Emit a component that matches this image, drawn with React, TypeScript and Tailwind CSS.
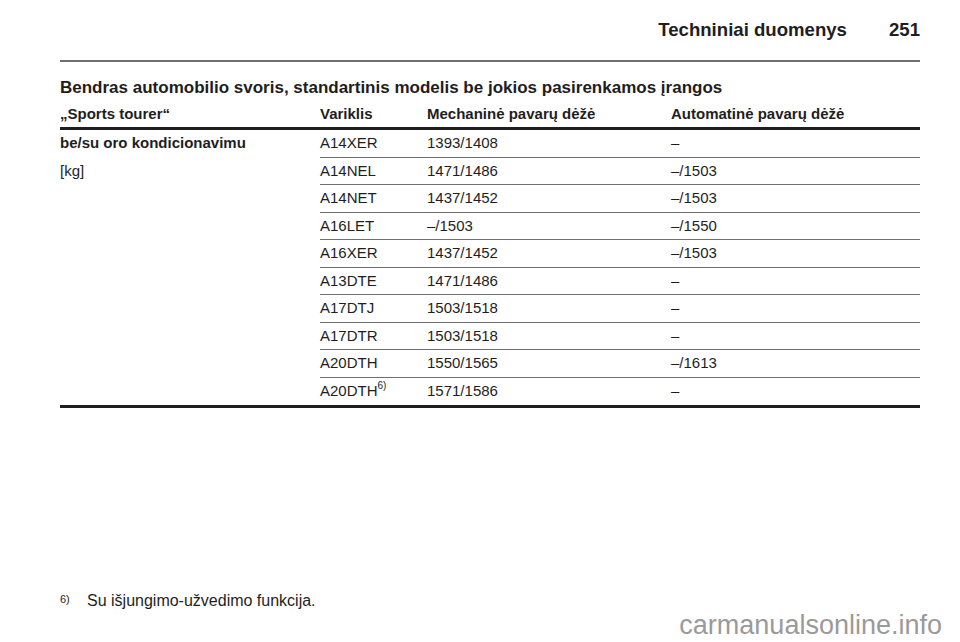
import React from "react";

const rows: [React.ReactNode, string, string][] = [
  ["A14XER", "1393/1408", "–"],
  ["A14NEL", "1471/1486", "–/1503"],
  ["A14NET", "1437/1452", "–/1503"],
  ["A16LET", "–/1503", "–/1550"],
  ["A16XER", "1437/1452", "–/1503"],
  ["A13DTE", "1471/1486", "–"],
  ["A17DTJ", "1503/1518", "–"],
  ["A17DTR", "1503/1518", "–"],
  ["A20DTH", "1550/1565", "–/1613"],
  [
    <>
      A20DTH<sup className="text-[10px] relative top-[-1px] align-super leading-none">6)</sup>
    </>,
    "1571/1586",
    "–",
  ],
];

export default function App() {
  return (
    <div
      className="relative w-[960px] h-[642px] bg-white text-[#1e1e1e] overflow-hidden"
      style={{ fontFamily: '"Liberation Sans", Arial, sans-serif' }}
    >
      <div className="pl-[60px] pr-[40px]">
        {/* page header */}
        <div className="pt-[20px] flex justify-end gap-[42px] text-[18.6px] leading-[20px] font-bold">
          <span>Techniniai duomenys</span>
          <span>251</span>
        </div>
        <div className="mt-[20px] border-t-2 border-[#6f6f6f]" />

        {/* title */}
        <div className="mt-[16px] text-[17px] leading-[20px] font-bold">
          Bendras automobilio svoris, standartinis modelis be jokios pasirenkamos įrangos
        </div>

        {/* table header */}
        <div className="mt-[7px] flex text-[15px] leading-[18px] font-bold pb-[4px]">
          <div className="w-[260px]">„Sports tourer“</div>
          <div className="w-[107px]">Variklis</div>
          <div className="w-[244px]">Mechaninė pavarų dėžė</div>
          <div className="flex-1">Automatinė pavarų dėžė</div>
        </div>
        <div className="border-t-[3px] border-[#1e1e1e]" />

        {/* table body */}
        <div className="flex text-[15px]">
          <div className="w-[260px]">
            <div className="h-[27.5px] leading-[26.5px] font-bold">be/su oro kondicionavimu</div>
            <div className="h-[27.5px] leading-[26.5px]">[kg]</div>
          </div>
          <div className="flex-1 flex flex-col">
            {rows.map((r, i) => (
              <div
                key={i}
                className={
                  "flex h-[27.5px] leading-[26.5px] " +
                  (i < rows.length - 1 ? "border-b border-[#707070]" : "")
                }
              >
                <div className="w-[107px] whitespace-nowrap">{r[0]}</div>
                <div className="w-[244px]">{r[1]}</div>
                <div className="flex-1">{r[2]}</div>
              </div>
            ))}
          </div>
        </div>
        <div className="border-t-[3px] border-[#1e1e1e]" />

        {/* footnote */}
        <div className="mt-[183px] flex items-start">
          <span className="w-[27px] text-[11px] leading-[11px] pt-[3px]">6)</span>
          <span className="text-[16px] leading-[20px]">Su išjungimo-užvedimo funkcija.</span>
        </div>
      </div>

      {/* watermark */}
      <div className="absolute right-[18px] top-[612px] text-[27px] leading-none text-[#9a9a9a]">
        carmanualsonline.info
      </div>
    </div>
  );
}
